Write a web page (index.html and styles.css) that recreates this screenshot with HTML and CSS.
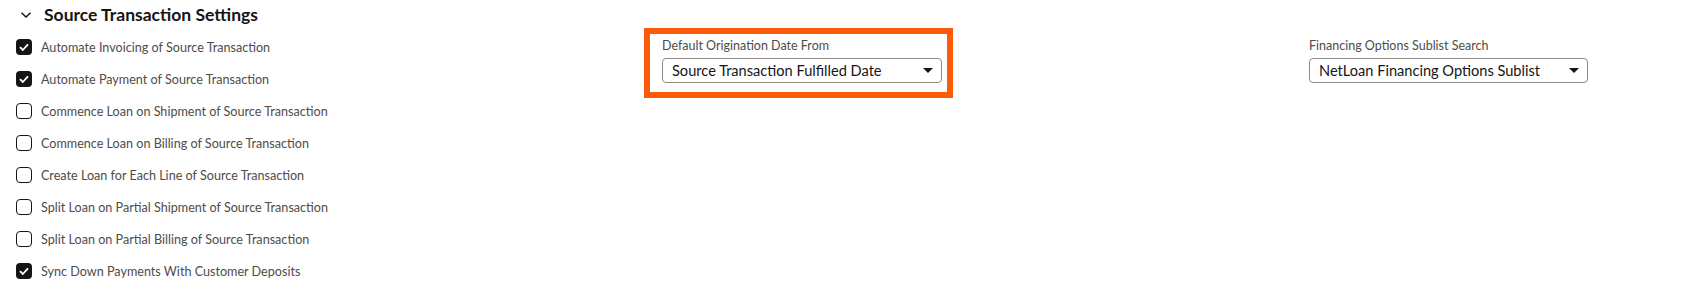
FILE: index.html
```html
<!DOCTYPE html>
<html lang="en">
<head>
  <meta charset="UTF-8">
  <title>Source Transaction Settings</title>
  <link rel="stylesheet" href="styles.css">
</head>
<body>
  <section class="section">
    <h2 class="section-title">
      <svg class="chevron" width="12" height="8" viewBox="0 0 12 8"><path d="M1.5 1.8 L6 6 L10.5 1.8" fill="none" stroke="#161513" stroke-width="1.5"/></svg>
      Source Transaction Settings
    </h2>

    <div class="section-body">
      <div class="col">
        <label class="check"><span class="box checked"><svg width="16" height="16" viewBox="0 0 16 16"><path d="M4 8.2 L6.8 11 L12 5.4" fill="none" stroke="#fff" stroke-width="1.8"/></svg></span>Automate Invoicing of Source Transaction</label>
        <label class="check"><span class="box checked"><svg width="16" height="16" viewBox="0 0 16 16"><path d="M4 8.2 L6.8 11 L12 5.4" fill="none" stroke="#fff" stroke-width="1.8"/></svg></span>Automate Payment of Source Transaction</label>
        <label class="check"><span class="box"></span>Commence Loan on Shipment of Source Transaction</label>
        <label class="check"><span class="box"></span>Commence Loan on Billing of Source Transaction</label>
        <label class="check"><span class="box"></span>Create Loan for Each Line of Source Transaction</label>
        <label class="check"><span class="box"></span>Split Loan on Partial Shipment of Source Transaction</label>
        <label class="check"><span class="box"></span>Split Loan on Partial Billing of Source Transaction</label>
        <label class="check"><span class="box checked"><svg width="16" height="16" viewBox="0 0 16 16"><path d="M4 8.2 L6.8 11 L12 5.4" fill="none" stroke="#fff" stroke-width="1.8"/></svg></span>Sync Down Payments With Customer Deposits</label>
      </div>

      <div class="col col-fields">
        <div class="field">
          <span class="highlight"></span>
          <span class="field-label">Default Origination Date From</span>
          <div class="select select-wide">
            <span>Source Transaction Fulfilled Date</span>
            <span class="caret"></span>
          </div>
        </div>
      </div>

      <div class="col col-fields">
        <div class="field">
          <span class="field-label">Financing Options Sublist Search</span>
          <div class="select">
            <span>NetLoan Financing Options Sublist</span>
            <span class="caret"></span>
          </div>
        </div>
      </div>
    </div>
  </section>
</body>
</html>
```

FILE: styles.css
```css
body, html {
  margin: 0;
  padding: 0;
  background: #fff;
  font-family: Lato, "Noto Sans", sans-serif;
  color: #161513;
}

.section-title {
  display: flex;
  align-items: center;
  height: 31px;
  box-sizing: border-box;
  margin: 0;
  padding: 0 0 2px 20px;
  font-size: 17.5px;
  font-weight: bold;
}

.chevron {
  margin-right: 12px;
  margin-top: 1px;
}

.section-body {
  display: grid;
  grid-template-columns: 646px 647px 1fr;
  padding-left: 16px;
}

.check {
  display: flex;
  align-items: center;
  height: 32px;
  font-size: 12.6px;
  color: #4f4c49;
}

.box {
  width: 16px;
  height: 16px;
  box-sizing: border-box;
  border: 1.5px solid #161513;
  border-radius: 4px;
  margin-right: 9px;
  flex-shrink: 0;
}

.box.checked {
  background: #161513;
  border: none;
}

.box svg {
  display: block;
}

.col-fields {
  padding-top: 7px;
}

.field {
  position: relative;
  width: 280px;
}

/* annotation frame around the field */
.highlight {
  position: absolute;
  left: -18px;
  top: -10px;
  width: 309px;
  height: 70px;
  box-sizing: border-box;
  border: 6px solid #fc5b0a;
}

.field-label {
  display: block;
  font-size: 12.5px;
  line-height: 16px;
  color: #4f4c49;
  margin-bottom: 4px;
}

.select {
  display: flex;
  align-items: center;
  justify-content: space-between;
  height: 25px;
  width: 279px;
  box-sizing: border-box;
  padding: 0 8px 0 9px;
  border: 1px solid #8f8c88;
  border-radius: 4px;
  font-size: 14.6px;
  color: #161513;
}

.select-wide {
  width: 280px;
}

.caret {
  width: 0;
  height: 0;
  border-left: 5px solid transparent;
  border-right: 5px solid transparent;
  border-top: 5px solid #161513;
}
```
